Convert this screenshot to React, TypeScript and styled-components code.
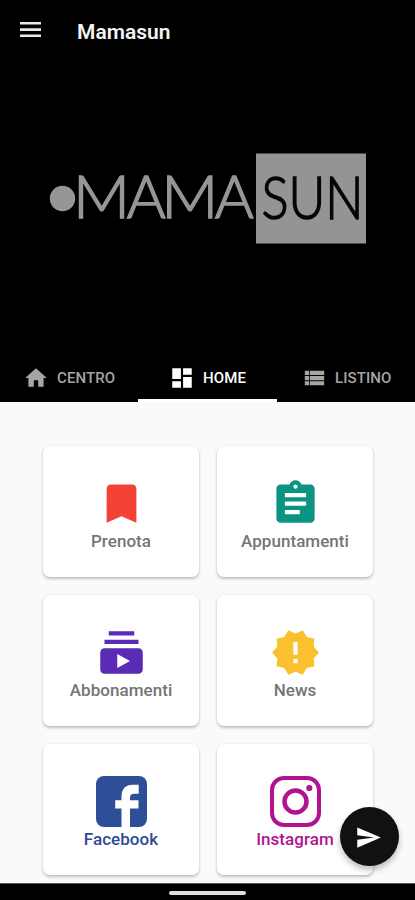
import React from "react";
import styled, { createGlobalStyle } from "styled-components";

const GlobalStyle = createGlobalStyle`
  * { box-sizing: border-box; }
  body { margin: 0; background: #fafafa; font-family: Roboto, "Liberation Sans", sans-serif; }
`;

const Screen = styled.div`
  position: relative;
  display: flex;
  flex-direction: column;
  width: 415px;
  height: 900px;
  overflow: hidden;
  background: #fafafa;
`;

const Header = styled.header`
  flex: none;
  height: 402px;
  display: flex;
  flex-direction: column;
  background: #000;
`;

const TopBar = styled.div`
  flex: none;
  height: 62px;
  display: flex;
  align-items: center;
  padding-left: 20px;
  gap: 36px;
`;

const MenuButton = styled.button`
  width: 21px;
  height: 19px;
  padding: 0;
  margin-top: -3px;
  border: 0;
  background: none;
  svg { display: block; }
`;

const Title = styled.h1`
  margin: 1px 0 0;
  color: #f4f4f4;
  font-size: 21px;
  line-height: 24px;
  font-weight: 600;
`;

const Hero = styled.div`
  flex: 1;
  padding: 91px 0 0 49px;
  svg { display: block; }
`;

const Tabs = styled.nav`
  flex: none;
  height: 50px;
  display: grid;
  grid-template-columns: 138px 139px 138px;
`;

const Tab = styled.button<{ $active?: boolean; $shift: number }>`
  display: flex;
  align-items: center;
  gap: 8px;
  padding: 4px 0 0 ${(p) => p.$shift}px;
  border: 0;
  border-bottom: 3px solid ${(p) => (p.$active ? "#fff" : "#000")};
  background: none;
  color: ${(p) => (p.$active ? "#fff" : "#a5a5a5")};
  font: 500 15px Roboto, sans-serif;
  letter-spacing: 0.1px;
  white-space: nowrap;
  svg { flex: none; }
`;

const Content = styled.main`
  flex: 1;
  min-height: 0;
  overflow: hidden;
  padding: 44px 42px 0 43px;
`;

const Grid = styled.div`
  display: grid;
  grid-template-columns: 156px 156px;
  grid-auto-rows: 131px;
  gap: 18px;
`;

const Card = styled.button<{ $color: string }>`
  display: flex;
  flex-direction: column;
  align-items: center;
  padding: 32px 0 0;
  border: 0;
  border-radius: 7px;
  background: #fff;
  box-shadow: 0 2px 3px rgba(0, 0, 0, 0.22), 0 0 3px rgba(0, 0, 0, 0.07);
  color: ${(p) => p.$color};
  font: 500 17px/24px Roboto, sans-serif;
  letter-spacing: 0.05px;
  svg { flex: none; display: block; }
`;

const SystemBar = styled.footer`
  flex: none;
  height: 17px;
  display: flex;
  justify-content: center;
  padding-top: 7px;
  background: #000;
  border-top: 1px solid #555;
`;

const HomePill = styled.div`
  width: 77px;
  height: 4px;
  border-radius: 2px;
  background: #ddd;
`;

const SendButton = styled.button`
  position: absolute;
  left: 340px;
  top: 807px;
  width: 59px;
  height: 59px;
  padding: 1px 2px 0 0;
  display: grid;
  place-items: center;
  border: 0;
  border-radius: 50%;
  background: #111;
  box-shadow: 0 4px 6px rgba(0, 0, 0, 0.25);
`;

const Icon = ({ d, size = 51, color = "currentColor" }: { d: string; size?: number; color?: string }) => (
  <svg width={size} height={size} viewBox="0 0 24 24" fill={color} aria-hidden="true">
    <path d={d} />
  </svg>
);

const paths = {
  home: "M10 20v-6h4v6h5v-8h3L12 3 2 12h3v8z",
  dashboard: "M3 13h8V3H3v10zm0 8h8v-6H3v6zm10 0h8V11h-8v10zm0-18v6h8V3h-8z",
  list: "M3.500 14h4v-3.800h-4V14zm0 4.700h4v-3.700h-4v3.700zM3.500 9.200h4V5.400h-4v3.800zM8.200 14h13.200v-3.800H8.200V14zm0 4.700h13.200v-3.700H8.200v3.700zM8.200 5.400v3.800h13.200V5.400H8.200z",
  bookmark: "M17 3H7c-1.100 0-1.990.9-1.990 2L5 21l7-3 7 3V5c0-1.100-.9-2-2-2z",
  assignment:
    "M19 3h-4.180C14.400 1.840 13.300 1 12 1c-1.300 0-2.400.840-2.820 2H5c-1.100 0-2 .9-2 2v14c0 1.100.9 2 2 2h14c1.100 0 2-.9 2-2V5c0-1.100-.9-2-2-2zm-7 0c.550 0 1 .450 1 1s-.450 1-1 1-1-.450-1-1 .450-1 1-1zm2 14H7v-2h7v2zm3-4H7v-2h10v2zm0-4H7V7h10v2z",
  subscriptions:
    "M20 8H4V6h16v2zm-2-6H6v2h12V2zm4 10v8c0 1.100-.9 2-2 2H4c-1.100 0-2-.9-2-2v-8c0-1.100.9-2 2-2h16c1.100 0 2 .9 2 2zm-6 4l-6-3.270v6.530L16 16z",
  news:
    "M23 12l-2.440-2.780.340-3.680-3.610-.820-1.890-3.180L12 3 8.600 1.540 6.710 4.720l-3.610.810.340 3.680L1 12l2.440 2.780-.340 3.690 3.610.820 1.890 3.180L12 21l3.400 1.460 1.890-3.180 3.610-.820-.340-3.680L23 12zm-10 5h-2v-2h2v2zm0-4h-2V7h2v6z",
  send: "M2.010 21L23 12 2.010 3 2 10l15 2-15 2z",
};

const LogoText = styled.text`
  font-family: Lato, sans-serif;
  font-weight: 300;
  font-size: 59px;
  stroke-width: 1.5px;
`;

const Logo = () => (
  <svg width="318" height="91" viewBox="0 0 318 91" role="img" aria-label="Mamasun">
    <circle cx="13.500" cy="45.500" r="12.700" fill="#969696" />
    <rect x="207" y="0.500" width="110" height="90" fill="#949494" />
    <LogoText y="65" fill="#969696" stroke="#969696">
      <tspan x="24" textLength="57" lengthAdjust="spacingAndGlyphs">M</tspan>
      <tspan x="77.800" textLength="39" lengthAdjust="spacingAndGlyphs">A</tspan>
      <tspan x="112.300" textLength="57" lengthAdjust="spacingAndGlyphs">M</tspan>
      <tspan x="165.800" textLength="39" lengthAdjust="spacingAndGlyphs">A</tspan>
    </LogoText>
    <LogoText x="212.500" y="66" fill="#050505" stroke="#050505" textLength="102" lengthAdjust="spacingAndGlyphs">
      SUN
    </LogoText>
  </svg>
);

const FacebookIcon = () => (
  <svg width="51" height="51" viewBox="0 0 51 51" aria-hidden="true">
    <rect width="51" height="51" rx="8" fill="#2f4e98" />
    <path fill="#fff" d="M25.500 51V32.500h-6.300v-8.200h6.300v-3.300c0-8 4.200-12.200 11-12.200h6.200v9h-4.500c-3 0-4.200 1.400-4.200 4v2.500h8.500v8.200H34V51z" />
  </svg>
);

const InstagramIcon = () => (
  <svg width="51" height="51" viewBox="0 0 51 51" fill="none" stroke="#b3128f" aria-hidden="true">
    <rect x="2" y="2" width="47" height="47" rx="12" strokeWidth="4" />
    <circle cx="25.500" cy="25.500" r="11" strokeWidth="4.500" />
    <circle cx="39.300" cy="12" r="3.100" fill="#b3128f" stroke="none" />
  </svg>
);

const services = [
  { label: "Prenota", color: "#757575", icon: <Icon d={paths.bookmark} color="#f44336" /> },
  { label: "Appuntamenti", color: "#757575", icon: <Icon d={paths.assignment} color="#0b9482" /> },
  { label: "Abbonamenti", color: "#757575", icon: <Icon d={paths.subscriptions} color="#5a2bb5" /> },
  { label: "News", color: "#757575", icon: <Icon d={paths.news} color="#fbc02d" /> },
  { label: "Facebook", color: "#2f4a98", icon: <FacebookIcon /> },
  { label: "Instagram", color: "#b3128f", icon: <InstagramIcon /> },
];

export default function App() {
  return (
    <Screen>
      <GlobalStyle />
      <Header>
        <TopBar>
          <MenuButton aria-label="Menu">
            <svg width="21" height="19" fill="#e8e8e8">
              <path d="M0 2h21v2.600H0zM0 8.300h21v2.600H0zM0 14.500h21v2.600H0z" />
            </svg>
          </MenuButton>
          <Title>Mamasun</Title>
        </TopBar>
        <Hero>
          <Logo />
        </Hero>
        <Tabs>
          <Tab $shift={23}>
            <Icon d={paths.home} size={26} />
            CENTRO
          </Tab>
          <Tab $active $shift={31}>
            <Icon d={paths.dashboard} size={26} />
            HOME
          </Tab>
          <Tab $shift={24}>
            <Icon d={paths.list} size={26} />
            LISTINO
          </Tab>
        </Tabs>
      </Header>
      <Content>
        <Grid>
          {services.map((s) => (
            <Card key={s.label} $color={s.color}>
              {s.icon}
              {s.label}
            </Card>
          ))}
        </Grid>
      </Content>
      <SystemBar>
        <HomePill />
      </SystemBar>
      <SendButton aria-label="Invia">
        <Icon d={paths.send} size={27} color="#fff" />
      </SendButton>
    </Screen>
  );
}
